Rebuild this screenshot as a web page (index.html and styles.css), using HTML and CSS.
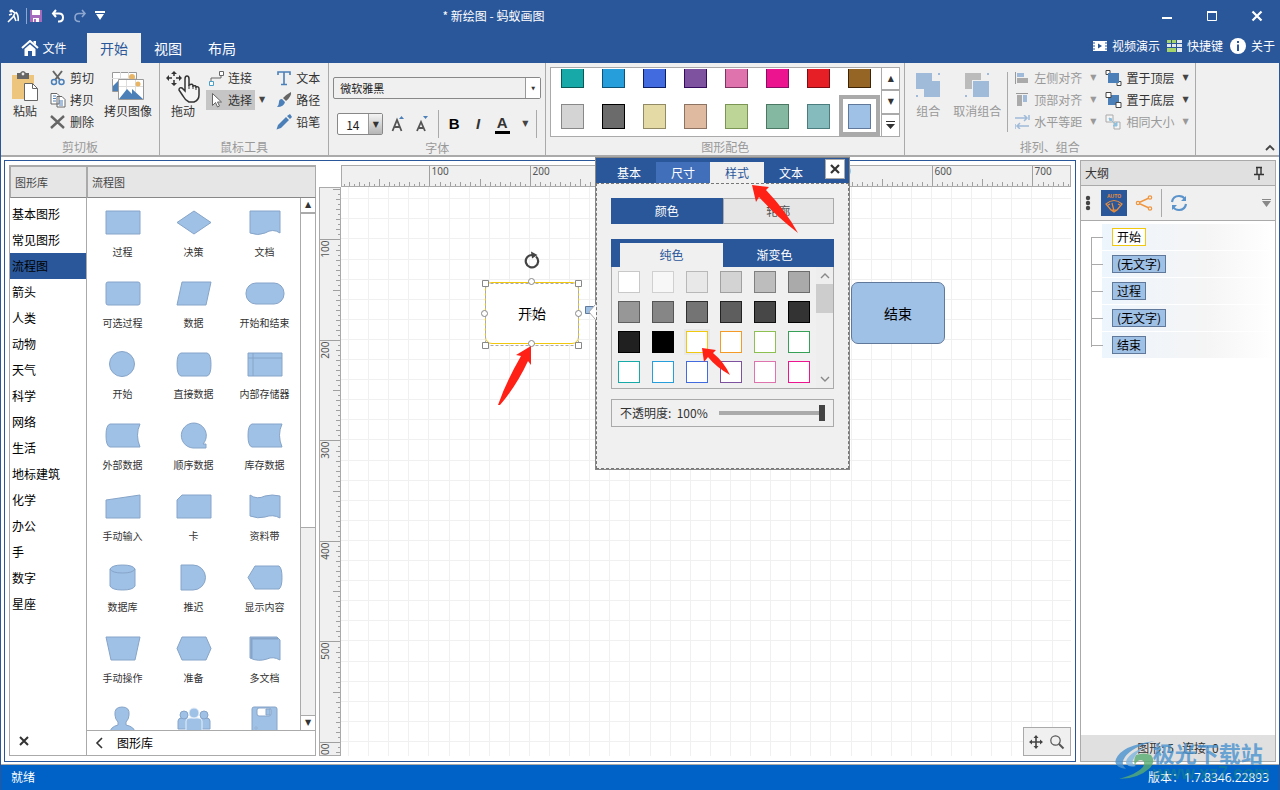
FILE: index.html
```html
<!DOCTYPE html>
<html lang="zh-CN">
<head>
<meta charset="utf-8">
<title>新绘图 - 蚂蚁画图</title>
<link rel="stylesheet" href="styles.css">
</head>
<body>
<div class="app">
  <header class="top">
    <div class="titlebar">
      <div class="qat">
        <svg width="14" height="16" viewBox="0 0 14 16"><path d="M5 2l4 3-2 4-5 5M8 8l2 5M3 7l3-1M10 4q3 4 2 9" fill="none" stroke="#fff" stroke-width="1.6"/><circle cx="5" cy="3" r="1.6" fill="#fff"/></svg>
        <span class="qat-line"></span>
        <button aria-label="保存"><svg width="14" height="14" viewBox="0 0 14 14"><path d="M1 1h12v12H1z" fill="#a66bbd"/><path d="M3 1h8v5H3zM4 9h6v4H4z" fill="#fff"/><path d="M5 10h2v3H5z" fill="#a66bbd"/></svg></button>
        <button aria-label="撤销"><svg width="14" height="14" viewBox="0 0 14 14"><path d="M5 1L2 4.500l3 3.500M2 4.500h6q4 0 4 4t-4 4H7" fill="none" stroke="#fff" stroke-width="2"/></svg></button>
        <button aria-label="重做"><svg width="14" height="14" viewBox="0 0 14 14"><path d="M9 1l3 3.500-3 3.500M12 4.500H6q-4 0-4 4t4 4h1" fill="none" stroke="#8da7cf" stroke-width="1.600"/></svg></button>
        <button aria-label="自定义"><svg width="10" height="10" viewBox="0 0 10 10"><path d="M0 0h10v2H0zM1 3h8L5 9z" fill="#fff"/></svg></button>
      </div>
      <h1 class="title">* 新绘图 - 蚂蚁画图</h1>
      <div class="winbtns">
        <button aria-label="最小化"><svg width="12" height="12"><path d="M1 7h10v2H1z" fill="#fff"/></svg></button>
        <button aria-label="最大化"><svg width="12" height="12"><path d="M1.500 1.500h9v9h-9z" fill="none" stroke="#fff" stroke-width="1"/><path d="M1 1h10v2H1z" fill="#fff"/></svg></button>
        <button aria-label="关闭"><svg width="12" height="12"><path d="M1.500 1.500l9 9M10.500 1.500l-9 9" stroke="#fff" stroke-width="2.200"/></svg></button>
      </div>
    </div>
    <nav class="tabs">
      <button class="tab file"><svg width="18" height="16" viewBox="0 0 18 16"><path d="M1 8l8-7 8 7" fill="none" stroke="#fff" stroke-width="2"/><path d="M12.500 1H15v4l-2.500-2zM3.500 9L9 4.200 14.500 9v7H11v-5H7v5H3.500z" fill="#fff"/></svg>文件</button>
      <button class="tab on">开始</button>
      <button class="tab">视图</button>
      <button class="tab">布局</button>
      <div class="help">
        <a href="#"><svg width="14" height="12"><path d="M0 1h14v10H0z" fill="#fff"/><path d="M0 3h2M0 6h2M0 9h2M12 3h2M12 6h2M12 9h2" stroke="#2a579a"/><path d="M5 3.500v5L9 6z" fill="#2a579a"/></svg>视频演示</a>
        <a href="#"><svg width="15" height="12"><path d="M0 0h4v3H0zM5 0h4v3H5zM0 8h9v4H0z" fill="#a5d46a"/><path d="M10 0h5v3h-5zM5 4h4v3H5zM10 4h5v3h-5zM10 8h5v4h-5zM0 4h4v3H0z" fill="#e4e8ea"/></svg>快捷键</a>
        <a href="#"><svg width="16" height="16"><circle cx="8" cy="8" r="8" fill="#fff"/><path d="M7 6.500h2V13H7zM7 3h2v2H7z" fill="#2a579a"/></svg>关于</a>
      </div>
    </nav>
  </header>

  <section class="ribbon">
    <div class="group">
      <div class="gbody g-clip">
        <button class="big"><svg width="28" height="30" viewBox="0 0 28 30"><path d="M1 4h22v24H1z" fill="#edc57c"/><path d="M6 2h3q3-4 6 0h3v6H6z" fill="#666"/><circle cx="12" cy="3" r="1.400" fill="#eee"/><path d="M13.500 12.500h8l5 5v12h-13z" fill="#fff" stroke="#666"/><path d="M21.500 12.500v5h5" fill="none" stroke="#666"/></svg>粘贴</button>
        <div class="stack">
          <button class="small"><svg width="16" height="16" viewBox="0 0 16 16"><path d="M3 1l7 9M12 1L5 10" stroke="#666" stroke-width="2" fill="none"/><circle cx="4" cy="12" r="2.500" fill="none" stroke="#4b7fb8" stroke-width="1.500"/><circle cx="11.500" cy="12" r="2.500" fill="none" stroke="#4b7fb8" stroke-width="1.500"/></svg>剪切</button>
          <button class="small"><svg width="16" height="16" viewBox="0 0 16 16"><path d="M1 1.500h6l2 2V12H1zM7 4.500h5l3 3V15H7z" fill="#fff" stroke="#666"/><path d="M3 4h3M3 6.500h3M3 9h3M9 9h4M9 11h4M9 13h4" stroke="#4b7fb8"/></svg>拷贝</button>
          <button class="small"><svg width="16" height="16" viewBox="0 0 16 16"><path d="M1 2l13 12M14 2L1 14" stroke="#666" stroke-width="2.400"/></svg>删除</button>
        </div>
        <button class="big wide"><svg width="34" height="30" viewBox="0 0 34 30"><path d="M1.500 1.500h24v19h-24z" fill="#fff" stroke="#999"/><path d="M9.500 1v18M17.500 1v7M1 7.500h24" stroke="#ddd"/><circle cx="21" cy="6" r="3" fill="#e8b566"/><path d="M2 20v-5l5-5v10z" fill="#4b7fb8"/><path d="M7.500 8.500h25v20h-25z" fill="#fff" stroke="#999"/><path d="M15.500 9v19M24.500 9v19M8 15.500h24" stroke="#ddd"/><circle cx="27" cy="13" r="2.500" fill="#e8b566"/><path d="M8 28l8-10 5 5v-5l11 10z" fill="#4b7fb8"/></svg>拷贝图像</button>
      </div>
      <p class="glabel">剪切板</p>
    </div>
    <div class="group">
      <div class="gbody g-mouse">
        <button class="big"><svg width="34" height="32" viewBox="0 0 34 32"><path d="M8 1v12M2 7h12" stroke="#333" stroke-width="1.500" stroke-dasharray="4 4"/><path d="M8 0l3 3H5zM8 15l3-3H5zM0 7l3-3v6zM16 7l-3-3v6z" fill="#333"/><path d="M19 20V8q0-3 2-3t2 3v6q4-2 4 1 3-1 3 1 3-1 3 2v6q0 5-5 7h-5q-4-2-6-6l-4-6q0-3 3-2l3 3z" fill="#f4f4f4" stroke="#333" stroke-width="1.500"/><path d="M23 14v4M27 15v3M30 16v3" stroke="#333" fill="none"/></svg>拖动</button>
        <div class="stack">
          <button class="small"><svg width="16" height="16" viewBox="0 0 16 16"><path d="M3 11V8h10V5" stroke="#666" fill="none"/><path d="M11.500 1.500h4v4h-4z" fill="#fff" stroke="#666"/><path d="M1.500 11.500h4v4h-4z" fill="#fff" stroke="#4b9fc8"/></svg>连接</button>
          <div class="row"><button class="small sel"><svg width="16" height="16" viewBox="0 0 16 16"><path d="M4.500 1.500v12l3-3 2 4.500 2-1-2-4h4z" fill="#fff" stroke="#666"/></svg>选择</button><span class="dd">▼</span></div>
        </div>
        <div class="stack">
          <button class="small"><svg width="16" height="16" viewBox="0 0 16 16"><path d="M2 5V2h12v3M8 2v12M5 14.500h6" stroke="#4b7fb8" stroke-width="1.600" fill="none"/></svg>文本</button>
          <button class="small"><svg width="16" height="16" viewBox="0 0 16 16"><path d="M15 0q1 4-5 9L7 6q4-4 8-6z" fill="#666"/><path d="M6 7l3 3q-1 5-8 5 2-2 2-5t3-3z" fill="#4b7fb8"/></svg>路径</button>
          <button class="small"><svg width="16" height="16" viewBox="0 0 16 16"><path d="M11 2l3-2 2 3-2 2zM10 3l3 3-8 8-4.500 1.500L2 11z" fill="#4b7fb8"/></svg>铅笔</button>
        </div>
      </div>
      <p class="glabel">鼠标工具</p>
    </div>
    <div class="group">
      <div class="g-font">
        <div class="combo"><select aria-label="字体"><option>微软雅黑</option></select><span class="cbtn">▼</span></div>
        <div class="fontrow">
          <div class="combo size"><select aria-label="字号"><option>14</option></select><span class="cbtn grad">▼</span></div>
          <button class="fb" aria-label="增大"><svg width="15" height="16" viewBox="0 0 15 16"><path d="M1.500 15L6 4l4.500 11M3 11h6" stroke="#555" stroke-width="1.800" fill="none"/><path d="M8 3h5l-2.500-3z" fill="#4b7fb8"/></svg></button>
          <button class="fb" aria-label="减小"><svg width="15" height="16" viewBox="0 0 15 16"><path d="M2 15L6 6l4 9M4 12h4" stroke="#555" stroke-width="1.800" fill="none"/><path d="M8 0h5l-2.500 3z" fill="#4b7fb8"/></svg></button>
          <span class="vsep"></span>
          <button class="fb"><b>B</b></button>
          <button class="fb"><i>I</i></button>
          <button class="fb"><span class="fcol">A</span></button>
          <span class="dd">▼</span>
          <span class="vsep"></span>
        </div>
      </div>
      <p class="glabel">字体</p>
    </div>
    <div class="group">
      <div class="gallery">
        <div class="sws">
          <button class="cell c1" aria-label="青"></button><button class="cell c2" aria-label="蓝"></button><button class="cell c3" aria-label="靛"></button><button class="cell c4" aria-label="紫"></button><button class="cell c5" aria-label="粉"></button><button class="cell c6" aria-label="洋红"></button><button class="cell c7" aria-label="红"></button><button class="cell c8" aria-label="棕"></button>
          <button class="cell c9" aria-label="浅灰"></button><button class="cell c10" aria-label="深灰"></button><button class="cell c11" aria-label="米黄"></button><button class="cell c12" aria-label="肤色"></button><button class="cell c13" aria-label="浅绿"></button><button class="cell c14" aria-label="绿"></button><button class="cell c15" aria-label="蓝绿"></button><button class="cell c16 cur" aria-label="浅蓝"></button>
        </div>
        <div class="gscroll"><button>▲</button><button>▼</button><button aria-label="更多"><svg width="9" height="9"><path d="M0 0h9v1H0zM0 3h9L4.500 8z" fill="#333"/></svg></button></div>
      </div>
      <p class="glabel">图形配色</p>
    </div>
    <div class="group">
      <div class="gbody g-arr">
        <button class="big dim"><svg width="24" height="28" viewBox="0 0 24 28"><path d="M0 2h16v8h8v16H8v-8H0zM22 2h2v2h-2zM0 24h2v2H0z" fill="#9fbbd9"/></svg>组合</button>
        <button class="big dim wide"><svg width="24" height="28" viewBox="0 0 24 28"><path d="M0 2h16v7H7v9H0z" fill="#bbb"/><path d="M8 10h16v16H8zM22 2h2v2h-2zM0 24h2v2H0z" fill="#9fbbd9"/></svg>取消组合</button>
        <span class="vsep tall"></span>
        <div class="stack">
          <button class="small dim"><svg width="15" height="14"><path d="M0 1h1v12H0z" fill="#999"/><path d="M2 2h7v4H2z" fill="#9fbbd9"/><path d="M2 7h11v5H2z" fill="#aaa"/></svg>左侧对齐<span class="dd">▼</span></button>
          <button class="small dim"><svg width="15" height="14"><path d="M1 0h12v1H1z" fill="#999"/><path d="M2 2h5v11H2z" fill="#aaa"/><path d="M8 2h4v7H8z" fill="#9fbbd9"/></svg>顶部对齐<span class="dd">▼</span></button>
          <button class="small dim"><svg width="15" height="14"><path d="M14 0v5M0 9v5M0 3h12M3 11h11M9 0l3 3-3 3M5 8l-3 3 3 3" fill="none" stroke="#9fbbd9" stroke-width="1.500"/></svg>水平等距<span class="dd">▼</span></button>
        </div>
        <div class="stack s2">
          <button class="small"><svg width="17" height="16"><path d="M12 11.500h4v4h-4z" fill="#fff" stroke="#444"/><path d="M3 3h11v10H3z" fill="#4b7fb8"/><path d="M1 .5h4v4H1z" fill="#fff" stroke="#444"/><path d="M3 3h3v3H3z" fill="#4b7fb8"/></svg>置于顶层<span class="dd">▼</span></button>
          <button class="small"><svg width="17" height="16"><path d="M3 3h11v10H3z" fill="#4b7fb8"/><path d="M1 .5h5v5H1zM11 10.500h5v5h-5z" fill="#fff" stroke="#444"/></svg>置于底层<span class="dd">▼</span></button>
          <button class="small dim"><svg width="17" height="16"><path d="M1 1h7v7H1zM9 8h6v7H9z" fill="#f4f4f4" stroke="#aaa"/><path d="M4 4l3 1-2 2zM6 6l5 5M12 12V8l-4 4z" stroke="#8fc0dd" fill="#8fc0dd"/></svg>相同大小<span class="dd">▼</span></button>
        </div>
      </div>
      <p class="glabel">排列、组合</p>
    </div>
    <div class="rest"><button aria-label="折叠功能区"><svg width="12" height="8"><path d="M2 6l4-4 4 4" fill="none" stroke="#444" stroke-width="1.800"/></svg></button></div>
  </section>

  <main class="work">
    <section class="doc">
      <aside class="lib">
        <div class="cats">
          <h2>图形库</h2>
          <ul>
            <li>基本图形</li><li>常见图形</li><li class="on">流程图</li><li>箭头</li><li>人类</li><li>动物</li><li>天气</li><li>科学</li><li>网络</li><li>生活</li><li>地标建筑</li><li>化学</li><li>办公</li><li>手</li><li>数字</li><li>星座</li>
          </ul>
          <button class="x" aria-label="关闭"><svg width="10" height="10"><path d="M1 1l8 8M9 1L1 9" stroke="#333" stroke-width="2"/></svg></button>
        </div>
        <div class="shapes">
          <h2>流程图</h2>
          <div class="shapebody">
            <div class="sgrid">
              <figure><svg class="s" viewBox="0 0 40 36"><path d="M3 7h34v23H3z"/></svg><figcaption>过程</figcaption></figure>
              <figure><svg class="s" viewBox="0 0 40 36"><path d="M20 7l17 11.500L20 30 3 18.500z"/></svg><figcaption>决策</figcaption></figure>
              <figure><svg class="s" viewBox="0 0 40 36"><path d="M5 7h30v22q-7-5-15 0-7 3-15 0z"/></svg><figcaption>文档</figcaption></figure>
              <figure><svg class="s" viewBox="0 0 40 36"><rect x="3" y="7" width="34" height="23" rx="2"/></svg><figcaption>可选过程</figcaption></figure>
              <figure><svg class="s" viewBox="0 0 40 36"><path d="M8 7h29l-5 23H3z"/></svg><figcaption>数据</figcaption></figure>
              <figure><svg class="s" viewBox="0 0 40 36"><rect x="1" y="8" width="38" height="21" rx="10"/></svg><figcaption>开始和结束</figcaption></figure>
              <figure><svg class="s" viewBox="0 0 40 36"><circle cx="19" cy="18" r="12.500"/></svg><figcaption>开始</figcaption></figure>
              <figure><svg class="s" viewBox="0 0 40 36"><path d="M7 7h26q4 1 4 11.500T33 30H7q-4-1-4-11.500T7 7z"/></svg><figcaption>直接数据</figcaption></figure>
              <figure><svg class="s" viewBox="0 0 40 36"><path d="M3 7h34v23H3zM8 7v23M3 12h34"/></svg><figcaption>内部存储器</figcaption></figure>
              <figure><svg class="s" viewBox="0 0 40 36"><path d="M7 7h30q-5 11 0 23H7q-4-1-4-11.500T7 7z"/></svg><figcaption>外部数据</figcaption></figure>
              <figure><svg class="s" viewBox="0 0 40 36"><path d="M32 31H19a12.500 12.500 0 1 1 10-4h3z"/></svg><figcaption>顺序数据</figcaption></figure>
              <figure><svg class="s" viewBox="0 0 40 36"><path d="M7 7h30q-5 11 0 23H7q-4-1-4-11.500T7 7z"/></svg><figcaption>库存数据</figcaption></figure>
              <figure><svg class="s" viewBox="0 0 40 36"><path d="M3 12l34-5v23H3z"/></svg><figcaption>手动输入</figcaption></figure>
              <figure><svg class="s" viewBox="0 0 40 36"><path d="M8 7h29v23H3V12z"/></svg><figcaption>卡</figcaption></figure>
              <figure><svg class="s" viewBox="0 0 40 36"><path d="M5 7q7 5 15 1 7-2 15 0v22q-7-4-15-1-7 2-15-1z"/></svg><figcaption>资料带</figcaption></figure>
              <figure><svg class="s" viewBox="0 0 40 36"><path d="M7 10v17q2 4 12.500 4T32 27V10q-2-4-12.500-4T7 10z"/><path d="M7 10q2 4 12.500 4T32 10" fill="none"/></svg><figcaption>数据库</figcaption></figure>
              <figure><svg class="s" viewBox="0 0 40 36"><path d="M7 6h12a12.500 12.500 0 0 1 0 25H7z"/></svg><figcaption>推迟</figcaption></figure>
              <figure><svg class="s" viewBox="0 0 40 36"><path d="M10 7h24q3 2 3 11.500T34 30H10L3 18.500z"/></svg><figcaption>显示内容</figcaption></figure>
              <figure><svg class="s" viewBox="0 0 40 36"><path d="M3 7h34l-5 23H8z"/></svg><figcaption>手动操作</figcaption></figure>
              <figure><svg class="s" viewBox="0 0 40 36"><path d="M8 7h24l5 11.500L32 30H8L3 18.500z"/></svg><figcaption>准备</figcaption></figure>
              <figure><svg class="s" viewBox="0 0 40 36"><path d="M5 7h27l3 3v20q-7-4-13-1-9 3-17-1z"/><path d="M6.500 28V8.500H33" fill="none" stroke-width="2"/></svg><figcaption>多文档</figcaption></figure>
              <figure><svg class="s" viewBox="0 0 40 36"><path d="M19 6q8 0 7 8 0 4-3 7v3q9 2 9 8H7q0-6 8-8v-3q-3-3-3-7-1-8 7-8z"/></svg></figure>
              <figure><svg class="s" viewBox="0 0 40 36"><path d="M4 28v-8q0-3 4-3h5v11zM27 17h5q4 0 4 3v8h-9z"/><circle cx="10" cy="14" r="4"/><circle cx="30" cy="14" r="4"/><g stroke="#e4eef9"><path d="M12 32V20q0-3 4-3h8q4 0 4 3v12z"/><circle cx="20" cy="12" r="5"/></g></svg></figure>
              <figure><svg class="s" viewBox="0 0 40 36"><rect x="7" y="6" width="25" height="28" rx="2"/><rect x="12" y="7" width="14" height="8" rx="2" fill="#fff"/><path d="M21 8h4v6h-4z"/><circle cx="11" cy="27" r="1" fill="#fff"/></svg></figure>
            </div>
            <div class="vscroll"><button>▲</button><span class="thumb"></span><span class="track"></span><button>▼</button></div>
          </div>
          <div class="lfoot"><svg width="8" height="12"><path d="M7 1L2 6l5 5" fill="none" stroke="#333" stroke-width="1.600"/></svg>图形库</div>
        </div>
      </aside>

      <div class="stage">
        <svg class="hruler" id="hruler"></svg>
        <svg class="vruler" id="vruler"></svg>
        <div class="canvas">
          <svg class="gridlines" id="grid"></svg>
          <div class="zoombox"><button aria-label="移动"><svg width="14" height="14"><path d="M7 1v12M1 7h12" stroke="#444" stroke-width="1.600"/><path d="M7 0l2.500 3h-5zM7 14l2.500-3h-5zM0 7l3-2.500v5zM14 7l-3-2.500v5z" fill="#444"/></svg></button><button aria-label="缩放"><svg width="16" height="16"><circle cx="6.500" cy="6.500" r="4.700" fill="none" stroke="#555" stroke-width="1.200"/><path d="M10 10l4.500 4.500" stroke="#555" stroke-width="2"/></svg></button></div>
        </div>

        <div class="node start">开始</div>
        <div class="node end">结束</div>
        <svg class="handles" width="120" height="110" viewBox="0 0 120 110">
          <path d="M57 10.500A6.200 6.200 0 1 1 53 9" fill="none" stroke="#444" stroke-width="2.200"/><path d="M52 5.500l6.500 3.500-5.500 3.500z" fill="#444"/>
          <path d="M6.500 37.500h93v62h-93z" fill="none" stroke="#aaa" stroke-dasharray="3 2"/>
          <g fill="#fff" stroke="#888"><path d="M3.500 34.500h6v6h-6zM96.500 34.500h6v6h-6zM3.500 96.500h6v6h-6zM96.500 96.500h6v6h-6z"/><circle cx="52.500" cy="35.500" r="3"/><circle cx="52.500" cy="97.500" r="3"/><circle cx="5.500" cy="67.500" r="3"/><circle cx="99.500" cy="67.500" r="3"/><circle cx="52.500" cy="67.500" r="3" fill-opacity=".3" stroke="#aaa"/></g>
          <path d="M106.500 60.500h12v7h-12z" fill="#a0c1e6" stroke="#60799a"/>
        </svg>

        <div class="popup">
          <svg class="tail" width="8" height="18"><path d="M8 1L1 9l7 8z" fill="#fff"/><path d="M7 2L1 9l6 7" stroke="#aaa" fill="none"/></svg>
          <div class="ptabs"><button>基本</button><button class="hov">尺寸</button><button class="on">样式</button><button>文本</button><button class="pclose" aria-label="关闭"><svg width="10" height="10"><path d="M1 1l8 8M9 1L1 9" stroke="#333" stroke-width="2.200"/></svg></button></div>
          <div class="pbody">
            <div class="seg"><button class="on">颜色</button><button>轮廓</button></div>
            <div class="colors">
              <div class="ctabs"><button class="on">纯色</button><button>渐变色</button></div>
              <div class="cbody">
                <div class="cgrid" id="cgrid"></div>
                <div class="cscroll"><svg width="10" height="6"><path d="M1 5l4-4 4 4" fill="none" stroke="#888" stroke-width="1.400"/></svg><span></span><svg width="10" height="6"><path d="M1 1l4 4 4-4" fill="none" stroke="#888" stroke-width="1.400"/></svg></div>
              </div>
            </div>
            <div class="opac"><label for="op">不透明度:&nbsp; 100%</label><input id="op" type="range" min="0" max="100" value="100"></div>
          </div>
        </div>
        <svg class="arrows" width="330" height="240" viewBox="0 0 330 240" fill="#ff2116">
          <path d="M52 161L37 170l5 1q-15 26-23 49l2 0q17-20 28-44l3 4z"/>
          <path d="M273 0l4 17 3-5q18 20 39 36-12-22-32-43l3-3z"/>
          <path d="M223 163l2 14 4-5q8 10 22 18-6-13-17-22l3-3z"/>
        </svg>
      </div>
    </section>

    <aside class="outline">
      <div class="ohead">大纲<svg width="10" height="14"><path d="M2 1.500h6M3 1v7M7 1v7M0 8.500h10M5 8v6" stroke="#333" fill="none" stroke-width="1.400"/></svg></div>
      <div class="otools">
        <svg width="6" height="16"><circle cx="3" cy="3" r="2.200" fill="#444"/><circle cx="3" cy="8" r="2.200" fill="#444"/><circle cx="3" cy="13" r="2.200" fill="#444"/></svg>
        <button class="auto" aria-label="自动"><span>AUTO</span><svg width="18" height="14"><path d="M1 5q8-7 16 0l-5 6-3 2-3-2zM9 12L7 4M6 11h6M3 6l2-1M13 5l2 1" fill="none" stroke="#e88e3c" stroke-width="1.200"/></svg></button>
        <button aria-label="树形"><svg width="18" height="16"><path d="M14 3L3 8l11 5" fill="none" stroke="#f0953f" stroke-width="1.400"/><g fill="#f0f0f0" stroke="#f0953f" stroke-width="1.200"><circle cx="15" cy="2.500" r="1.700"/><circle cx="3" cy="8" r="1.700"/><circle cx="15" cy="13.500" r="1.700"/></g></svg></button>
        <span class="osep"></span>
        <button aria-label="刷新"><svg width="18" height="18"><path d="M2 8q1-6 7-6 4 0 6 3M16 10q-1 6-7 6-4 0-6-3" fill="none" stroke="#5b93cb" stroke-width="2.200"/><path d="M16 2v5h-5zM2 16v-5h5z" fill="#5b93cb"/></svg></button>
        <svg class="more" width="9" height="9"><path d="M0 0h9v1H0zM0 2h9L4.500 8z" fill="#888"/></svg>
      </div>
      <ul class="tree">
        <li><span class="yel">开始</span></li><li><span>(无文字)</span></li><li><span>过程</span></li><li><span>(无文字)</span></li><li><span>结束</span></li>
      </ul>
      <div class="ofoot">图形: 5 &nbsp; 连接: 0</div>
    </aside>
  </main>

  <footer class="status"><span>就绪</span><span>版本：1.7.8346.22893</span></footer>
  <div class="mark">
    <svg width="44" height="40" viewBox="0 0 44 40"><path d="M41 1Q8 5 2 19q-3 8 10 10-6-5-1-12Q18 7 41 1z" fill="#4b93cf"/><path d="M33 6Q12 14 12 23q2 5 10 3-5-2-3-6Q22 12 33 6z" fill="#7eb5df"/><path d="M22 15q8-3 15 0 5 6-1 13-12 11-31 11 18-5 24-12 3-6-2-7-4 0-6 5-2-5 1-10z" fill="#58ad74"/></svg>
    <div><strong>极光下载站</strong><em>www.xz7.com</em></div>
  </div>
</div>
<script src="app.js"></script>
</body>
</html>
```
FILE: app.js
```js
const NS = 'http://www.w3.org/2000/svg';
const UNIT = 1.005;

function add(parent, name, attrs, text) {
  const el = document.createElementNS(NS, name);
  for (const k in attrs) el.setAttribute(k, attrs[k]);
  if (text) el.textContent = text;
  parent.appendChild(el);
}

// Rulers: a short tick every 5 units, longer ones at 10 and 50, a full one at 100.
function ruler(id, origin, vertical) {
  const svg = document.getElementById(id);
  svg.replaceChildren();
  const box = svg.getBoundingClientRect();
  const size = vertical ? box.height : box.width;
  let d = '';
  for (let u = 5; origin + u * UNIT < size; u += 5) {
    const p = Math.round(origin + u * UNIT) + 0.5;
    if (p < 0) continue;
    const len = u % 100 === 0 ? 22 : u % 50 === 0 ? 8 : u % 10 === 0 ? 5 : 3;
    d += vertical ? `M${21 - len} ${p}H21` : `M${p} ${21 - len}V21`;
    if (u % 100 === 0) {
      add(svg, 'text', vertical
        ? { transform: `translate(9 ${p + 1}) rotate(-90)`, 'text-anchor': 'end' }
        : { x: p + 2, y: 9 }, String(u));
    }
  }
  add(svg, 'path', { d, stroke: '#a0a0a0', fill: 'none' });
}

function draw() {
  ruler('hruler', -13, false);
  ruler('vruler', -49, true);
  const grid = document.getElementById('grid');
  grid.replaceChildren();
  let g = '';
  for (let u = 20; u < 3000; u += 20) {
    g += `M${Math.round(u * UNIT - 13) + 0.5} 0V2000M0 ${Math.round(u * UNIT - 49) + 0.5}H3000`;
  }
  add(grid, 'path', { d: g, stroke: '#f0f0f0', fill: 'none' });
}
draw();
window.addEventListener('resize', draw);

// Fill and border of each swatch in the style popup.
const swatches = [
  ['#fff', '#c8c8c8'], ['#f7f7f7', '#d0d0d0'], ['#e8e8e8', '#b8b8b8'], ['#d3d3d3', '#a0a0a0'], ['#bdbdbd', '#808080'], ['#aaa', '#6c6c6c'],
  ['#979797', '#606060'], ['#868686', '#555'], ['#747474', '#303030'], ['#5e5e5e', '#222'], ['#474747', '#111'], ['#333', '#000'],
  ['#202020', '#000'], ['#000', '#000'], ['#fff', '#f2c80f'], ['#fff', '#f39a27'], ['#fff', '#8cc152'], ['#fff', '#36a156'],
  ['#fff', '#17a9a8'], ['#fff', '#259edb'], ['#fff', '#436be0'], ['#fff', '#7f52a0'], ['#fff', '#de73ae'], ['#fff', '#ed148f']
];
const box = document.getElementById('cgrid');
for (const [fill, line] of swatches) {
  const b = document.createElement('button');
  b.style.background = fill;
  b.style.borderColor = line;
  b.setAttribute('aria-label', fill);
  box.appendChild(b);
}
```
FILE: styles.css
```css
* { box-sizing: border-box; }
body, h1, h2, p, ul, figure { margin: 0; padding: 0; }
ul { list-style: none; }
body { font: 12px/16px "Noto Sans CJK SC", sans-serif; color: #333; background: #fff; }
button { font: inherit; color: inherit; background: none; border: 0; padding: 0; }
svg { display: block; flex: none; }
.app { position: relative; display: flex; flex-direction: column; height: 100vh; min-height: 600px; border: solid #2a579a; border-width: 0 1px; overflow: hidden; }

/* title and tabs */
.top { background: #2a579a; color: #fff; flex: none; }
.titlebar { display: flex; align-items: center; height: 32px; }
.qat { display: flex; align-items: center; gap: 8px; padding-left: 5px; width: 110px; }
.qat-line { width: 1px; height: 16px; background: #8da7cf; margin: 0 -6px 0 -2px; }
.title { flex: 1; text-align: center; font-size: 12px; font-weight: 400; padding-right: 268px; }
.winbtns { display: flex; }
.winbtns button { width: 45px; height: 32px; display: grid; place-items: center; }
.tabs { display: flex; align-items: stretch; margin-top: 1px; height: 30px; }
.tab { width: 54px; font-size: 14px; }
.tab.on { background: #f0f0f0; color: #2a579a; }
.file { width: 86px; display: flex; align-items: center; justify-content: center; gap: 3px; font-size: 12px; }
.help { margin-left: auto; display: flex; align-items: center; gap: 7px; padding: 0 4px 4px 0; }
.help a { display: flex; align-items: center; gap: 5px; color: #fff; text-decoration: none; }

/* ribbon */
.ribbon { display: flex; flex: none; height: 94px; background: #f0f0f0; border-bottom: 2px solid #aaa; }
.group { display: flex; flex-direction: column; justify-content: space-between; border-right: 1px solid #aaa; padding-top: 4px; }
.glabel { text-align: center; color: #999; height: 18px; line-height: 19px; }
.gbody { display: flex; align-items: flex-start; }
.g-clip { padding: 0 5px 0 4px; gap: 4px; }
.g-mouse { padding: 0 6px 0 3px; gap: 3px; }
.big { display: flex; flex-direction: column; align-items: center; justify-content: space-between; width: 40px; height: 48px; margin-top: 4px; white-space: nowrap; }
.big.wide { width: 52px; margin-left: 4px; }
.stack { display: flex; flex-direction: column; }
.small, .row { display: flex; align-items: center; height: 22px; }
.small { gap: 4px; padding: 0 2px; white-space: nowrap; }
.small.sel { height: 20px; background: #c5c5c5; padding-right: 3px; }
.g-mouse .stack + .stack { margin-left: 6px; }
.g-clip .small { padding: 0 0 0 1px; }
.dim { color: #999; }
.dd { font: 8px/10px "DejaVu Sans", sans-serif; padding: 0 4px; color: #444; }
.dim .dd { color: #999; }
.row .dd { padding-right: 0; }
.g-font { padding: 10px 4px 0; width: 216px; display: flex; flex-direction: column; gap: 11px; }
.combo { display: flex; height: 22px; border: 1px solid #888; border-radius: 2px; }
.combo select { flex: 1; min-width: 0; appearance: none; border: 0; background: none; font: 11px "Noto Sans CJK SC", sans-serif; padding: 0 6px; color: #222; }
.cbtn { width: 15px; border-left: 1px solid #999; background: #fff; display: grid; place-items: center; font: 5px "DejaVu Sans", sans-serif; }
.cbtn.grad { font-size: 8px; width: 14px; background: linear-gradient(#f4f4f4, #b5b5b5); }
.fontrow { display: flex; align-items: center; height: 28px; padding-left: 4px; }
.combo.size { width: 46px; background: #fff; margin-right: 3px; }
.size select { padding: 0 8px; font-size: 12px; }
.fontrow .fb { width: 24px; display: grid; place-items: center; color: #333; font: 700 15px/20px "Liberation Sans", sans-serif; }
.fontrow .fb b { color: #000; }
.fontrow .fb + .dd { padding: 0 8px; }
.vsep { width: 1px; height: 28px; background: #aaa; margin: 0 3px 0 4px; }
.vsep:last-child { margin: 0; }
.fcol { border-bottom: 3px solid #000; padding: 0 2px; line-height: 16px; }
.gallery { display: flex; height: 70px; margin: 0 4px; border: 1px solid #aaa; background: #fff; overflow: hidden; }
.sws { display: grid; grid-template-columns: repeat(8, 41px); align-content: end; padding: 0 1px; border-top: 1px solid #fff; overflow: hidden; }
.cell { height: 41px; padding: 0; border: 9px solid #fff; }
.cell::before { content: ""; display: block; height: 23px; background: var(--c); border: 1px solid var(--b); }
.cell.cur { border: 4px solid #aaa; padding: 5px; }
.c1 { --c: #17a9a8; --b: #0b5957; } .c2 { --c: #259edb; --b: #0d5377; } .c3 { --c: #436be0; --b: #0c1e66; } .c4 { --c: #7f52a0; --b: #340a5e; }
.c5 { --c: #de73ae; --b: #803360; } .c6 { --c: #ed148f; --b: #870d65; } .c7 { --c: #e61e25; --b: #7d0d12; } .c8 { --c: #956526; --b: #3c2405; }
.c9 { --c: #d5d4d5; --b: #888; } .c10 { --c: #6b6b6b; --b: #000; } .c11 { --c: #e4daa5; --b: #918a64; } .c12 { --c: #dfb9a0; --b: #8d7462; }
.c13 { --c: #bdd597; --b: #7b9654; } .c14 { --c: #84b8a0; --b: #4b7862; } .c15 { --c: #86bbbd; --b: #4c7d7e; } .c16 { --c: #a0c1e6; --b: #60799a; }
.gscroll { display: flex; flex-direction: column; width: 18px; border-left: 1px solid #aaa; }
.gscroll button { flex: 1; font: 8px/8px "DejaVu Sans", sans-serif; display: grid; place-items: center; }
.gscroll button + button { border-top: 2px solid #aaa; }
.g-arr { padding: 0 3px; }
.g-arr .big.wide { margin-left: 3px; }
.g-arr .dd { padding: 0 1px 0 4px; }
.vsep.tall { height: 60px; margin: 5px 5px 0 4px; }
.s2 { margin-left: 4px; }
.rest { flex: 1; display: flex; justify-content: flex-end; align-items: flex-end; padding: 3px; }

/* workspace */
.work { flex: 1; min-height: 0; display: flex; gap: 4px; padding: 3px 3px 2px; border-bottom: 1px solid #aaa; }
.doc { flex: 1; min-width: 0; display: flex; gap: 3px; border: 1px solid #2a579a; padding: 4px 4px 5px; }
.lib { display: flex; flex: none; width: 307px; border: 1px solid #aaa; }
.lib h2 { height: 32px; background: #e6e6e6; border: 1px solid #aaa; border-bottom-color: #888; font: 11px/30px "Noto Sans CJK SC", sans-serif; color: #444; padding-left: 4px; margin: 0 -1px 0 0; }
.cats { width: 77px; display: flex; flex-direction: column; border-right: 1px solid #aaa; color: #000; }
.cats ul { padding-top: 3px; flex: 1; min-height: 0; overflow: hidden; }
.cats li { height: 26px; line-height: 26px; padding-left: 2px; }
.cats li.on { background: #2a579a; }
.x { margin: 0 0 9px 9px; align-self: flex-start; }
.shapes { flex: 1; min-width: 0; display: flex; flex-direction: column; }
.shapes .shapebody { flex: 1; min-height: 0; display: flex; }
.sgrid { flex: 1; display: grid; grid-template-columns: repeat(3, 1fr); grid-auto-rows: 71px; overflow: hidden; }
figure { display: flex; flex-direction: column; align-items: center; gap: 5px; padding-top: 6px; }
figcaption { font-size: 10px; line-height: 14px; white-space: nowrap; }
.s { width: 40px; height: 36px; fill: #a0c1e6; stroke: #86a4c8; }
.vscroll { width: 15px; display: flex; flex-direction: column; background: #f0f0f0; border-left: 1px solid #aaa; }
.vscroll button { height: 15px; font: 8px/14px "DejaVu Sans", sans-serif; background: #fff; border-bottom: 1px solid #aaa; }
.vscroll button:last-child { border: 0; border-top: 1px solid #aaa; }
.thumb { flex: 315; background: #fff; border-bottom: 1px solid #aaa; border-top: 1px solid #aaa; }
.track { flex: 188; }
.lfoot { height: 25px; border-top: 1px solid #aaa; display: flex; align-items: center; gap: 14px; padding-left: 8px; color: #000; }
.stage { position: relative; flex: 1; min-width: 0; display: grid; grid-template: 22px 1fr / 22px 1fr; }
.hruler, .vruler { background: #f0f0f0; border: 1px solid #aaa; font: 10px "Noto Sans", sans-serif; fill: #555; overflow: hidden; }
.hruler { grid-column: 2; width: 100%; height: 22px; }
.vruler { grid-column: 1; grid-row: 2; width: 22px; height: 100%; }
.canvas { position: relative; grid-column: 2; grid-row: 2; overflow: hidden; }
.gridlines { position: absolute; width: 100%; height: 100%; }
.zoombox { position: absolute; right: 0; bottom: 0; width: 48px; height: 29px; border: 1px solid #aaa; background: #f0f0f0; display: flex; align-items: center; justify-content: center; gap: 6px; }
.node { position: absolute; top: 117px; width: 94px; height: 62px; display: grid; place-items: center; font-size: 14px; color: #000; border-radius: 7px; }
.start { left: 166px; border: 1px solid #f2c80f; background: #fff; }
.end { left: 532px; border: 1px solid #60799a; background: #a0c1e6; }
.handles { position: absolute; left: 160px; top: 81px; }

/* style popup */
.popup { position: absolute; left: 276px; top: -8px; width: 255px; height: 313px; background: #f0f0f0; border: 1px solid #888; }
.tail { position: absolute; left: -8px; top: 145px; }
.ptabs { display: flex; height: 25px; background: #2a579a; color: #fff; padding: 4px 0 0 6px; }
.ptabs button { width: 54px; line-height: 22px; }
.ptabs .hov { background: #416fb9; }
.ptabs .on { background: #f0f0f0; color: #2a579a; }
.ptabs .pclose { position: absolute; right: 4px; top: 1px; width: 20px; height: 20px; background: #fff; border: 1px solid #aaa; display: grid; place-items: center; }
.pbody { height: 286px; border: 1px dashed #777; padding: 14px; display: flex; flex-direction: column; }
.seg { display: flex; height: 26px; }
.seg button { flex: 1; border: 1px solid #aaa; background: #e6e6e6; color: #555; }
.seg .on { background: #2a579a; border-color: #2a579a; color: #fff; }
.colors { margin: 15px 0 10px; height: 150px; border: 1px solid #aaa; border-top: 0; }
.ctabs { display: flex; height: 28px; margin: 0 -1px; background: #2a579a; color: #fff; padding: 4px 0 0 9px; }
.ctabs button { width: 103px; line-height: 24px; }
.ctabs .on { background: #f0f0f0; color: #2a579a; }
.cbody { display: flex; justify-content: space-between; height: 121px; }
.cgrid { display: grid; grid-template-columns: repeat(6, 22px); grid-auto-rows: 22px; gap: 8px 12px; padding: 4px 0 0 6px; }
.cgrid button { border: 1px solid; }
.cgrid button:nth-child(15) { box-shadow: 0 0 0 2px #e8e8e8; }
.cscroll { width: 17px; background: #eee; display: flex; flex-direction: column; align-items: center; padding: 6px 0; }
.cscroll span { width: 17px; height: 29px; background: #cdcdcd; margin: 5px 0 auto; }
.opac { display: flex; align-items: center; justify-content: space-between; height: 28px; border: 1px solid #aaa; padding: 0 8px; white-space: nowrap; }
.opac input { appearance: none; width: 106px; height: 16px; margin: 0; background: linear-gradient(#aaa, #aaa) center / 100% 4px no-repeat; }
.opac input::-webkit-slider-thumb { appearance: none; width: 6px; height: 16px; background: #444; }
.arrows { position: absolute; left: 160px; top: 20px; pointer-events: none; }

/* outline panel */
.outline { width: 196px; flex: none; display: flex; flex-direction: column; border: 1px solid #aaa; }
.ohead { display: flex; justify-content: space-between; align-items: center; height: 25px; background: #e0e0e0; border-bottom: 1px solid #aaa; padding: 0 11px 0 4px; }
.otools { display: flex; align-items: center; height: 35px; background: #f0f0f0; border-bottom: 1px solid #aaa; padding-left: 4px; gap: 8px; }
.auto { width: 26px; height: 26px; background: #2a579a; color: #e88e3c; display: flex; flex-direction: column; align-items: center; justify-content: center; margin-left: 2px; }
.auto span { font: 700 5px/6px "Liberation Sans", sans-serif; }
.osep { width: 1px; height: 28px; background: #aaa; }
.more { margin: 0 4px 0 auto; }
.tree { flex: 1; padding: 3px 0 0 21px; }
.tree li { position: relative; height: 26px; margin-bottom: 1px; padding: 4px 10px; background: linear-gradient(90deg, #edf5fd, #f5f5f5 60%, #fff); }
.tree li::before { content: ""; position: absolute; left: -11px; top: 13px; width: 11px; height: 28px; border: solid #aaa; border-width: 1px 0 0 1px; }
.tree li:last-child::before { height: 0; }
.tree span { display: inline-block; height: 18px; line-height: 16px; padding: 0 4px; border: 1px solid #60799a; background: #a0c1e6; color: #000; vertical-align: top; }
.tree .yel { border-color: #f2c80f; background: #fff; }
.ofoot { height: 26px; line-height: 26px; background: #e0e0e0; text-align: center; }
.status { flex: none; display: flex; justify-content: space-between; align-items: center; height: 25px; background: #0062c6; color: #fff; padding: 0 10px; font-family: "Open Sans", "Noto Sans CJK SC", sans-serif; }
.mark { position: absolute; right: 9px; bottom: 8px; display: flex; opacity: .8; pointer-events: none; }
.mark div { display: flex; flex-direction: column; margin-left: -5px; }
.mark strong { font-size: 22px; line-height: 24px; color: #4b93cf; }
.mark em { font: 700 18px/18px "Liberation Sans", sans-serif; color: #168a80; opacity: .6; }
```
